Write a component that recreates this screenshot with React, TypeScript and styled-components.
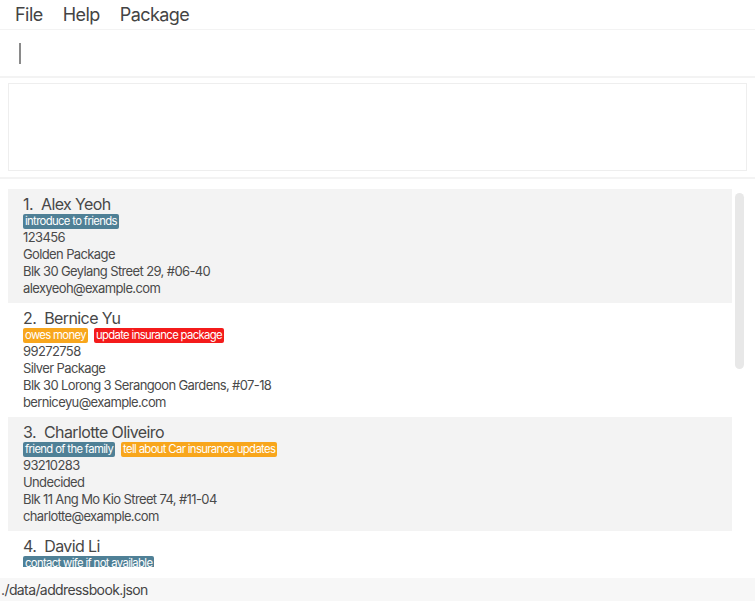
import React from "react";
import styled, { createGlobalStyle } from "styled-components";

const Global = createGlobalStyle`
  html, body { margin: 0; padding: 0; background: #ffffff; }
  body { font-family: Inter, "Liberation Sans", sans-serif; color: #4a4a4a; }
  * { box-sizing: border-box; }
`;

const Window = styled.div`
  width: 755px;
  height: 601px;
  display: flex;
  flex-direction: column;
  overflow: hidden;
  background: #fff;
`;

const MenuBar = styled.div`
  height: 29px;
  display: flex;
  align-items: center;
  gap: 20px;
  padding-left: 15px;
  font-size: 18px;
  color: #444;
  letter-spacing: -0.55px;
`;

const MenuItem = styled.span``;

const Separator = styled.div<{ $h?: number }>`
  height: ${(p) => p.$h ?? 2}px;
  background: #f3f3f3;
  flex: none;
`;

const CommandBox = styled.div`
  height: 46px;
  display: flex;
  align-items: center;
  padding-left: 19px;
`;

const Caret = styled.div`
  width: 1.5px;
  height: 21px;
  background: #8a8a8a;
`;

const ResultArea = styled.div`
  padding: 5px 8px 5px 8px;
  height: 99px;
`;

const ResultBox = styled.div`
  height: 88px;
  border: 1px solid #eeeeee;
`;

const ListArea = styled.div`
  flex: 1;
  min-height: 0;
  display: flex;
  align-items: flex-start;
  gap: 3px;
  padding: 10px 0 11px 8px;
`;

const List = styled.div`
  width: 724px;
  height: 100%;
  display: flex;
  flex-direction: column;
  overflow: hidden;
`;

const ScrollTrack = styled.div`
  width: 9px;
  margin-top: 4px;
  height: 176px;
  border-radius: 5px;
  background: #e8e8e8;
`;

const Card = styled.div<{ $alt: boolean }>`
  flex: none;
  height: 114px;
  padding: 5px 0 0 15px;
  background: ${(p) => (p.$alt ? "#f3f3f3" : "#ffffff")};
`;

const Name = styled.div`
  height: 20px;
  line-height: 20px;
  font-size: 16px;
  color: #474747;
  letter-spacing: -0.6px;
`;

const Index = styled.span`
  margin-right: 8px;
`;

const Tags = styled.div`
  display: flex;
  gap: 6px;
  height: 15px;
`;

const Tag = styled.span<{ $color: string }>`
  height: 15px;
  line-height: 15px;
  padding: 0 2px;
  font-size: 11.3px;
  color: #fff;
  border-radius: 2px;
  background: ${(p) => p.$color};
  letter-spacing: -0.65px;
`;

const Line = styled.div`
  height: 17px;
  line-height: 17px;
  font-size: 13px;
  color: #4a4a4a;
  letter-spacing: -0.62px;
`;

const StatusBar = styled.div`
  flex: none;
  height: 23px;
  background: #f7f7f7;
  display: flex;
  align-items: center;
  padding-left: 1px;
  font-size: 14px;
  color: #444;
  letter-spacing: -0.6px;
`;

const TEAL = "#4f8096";
const ORANGE = "#f8a61c";
const RED = "#f41b1b";

type Person = {
  name: string;
  tags: { label: string; color: string }[];
  phone: string;
  pkg: string;
  address: string;
  email: string;
};

const people: Person[] = [
  {
    name: "Alex Yeoh",
    tags: [{ label: "introduce to friends", color: TEAL }],
    phone: "123456",
    pkg: "Golden Package",
    address: "Blk 30 Geylang Street 29, #06-40",
    email: "alexyeoh@example.com",
  },
  {
    name: "Bernice Yu",
    tags: [
      { label: "owes money", color: ORANGE },
      { label: "update insurance package", color: RED },
    ],
    phone: "99272758",
    pkg: "Silver Package",
    address: "Blk 30 Lorong 3 Serangoon Gardens, #07-18",
    email: "berniceyu@example.com",
  },
  {
    name: "Charlotte Oliveiro",
    tags: [
      { label: "friend of the family", color: TEAL },
      { label: "tell about Car insurance updates", color: ORANGE },
    ],
    phone: "93210283",
    pkg: "Undecided",
    address: "Blk 11 Ang Mo Kio Street 74, #11-04",
    email: "charlotte@example.com",
  },
  {
    name: "David Li",
    tags: [{ label: "contact wife if not available", color: TEAL }],
    phone: "91031282",
    pkg: "Golden Package",
    address: "Blk 436 Serangoon Gardens Street 26, #16-43",
    email: "lidavid@example.com",
  },
];

export default function App() {
  return (
    <Window>
      <Global />
      <MenuBar>
        <MenuItem>File</MenuItem>
        <MenuItem>Help</MenuItem>
        <MenuItem>Package</MenuItem>
      </MenuBar>
      <Separator $h={1} />
      <CommandBox>
        <Caret />
      </CommandBox>
      <Separator />
      <ResultArea>
        <ResultBox />
      </ResultArea>
      <Separator />
      <ListArea>
        <List>
          {people.map((p, i) => (
            <Card key={p.name} $alt={i % 2 === 0}>
              <Name>
                <Index>{i + 1}.</Index>
                {p.name}
              </Name>
              <Tags>
                {p.tags.map((t) => (
                  <Tag key={t.label} $color={t.color}>
                    {t.label}
                  </Tag>
                ))}
              </Tags>
              <Line>{p.phone}</Line>
              <Line>{p.pkg}</Line>
              <Line>{p.address}</Line>
              <Line>{p.email}</Line>
            </Card>
          ))}
        </List>
        <ScrollTrack />
      </ListArea>
      <StatusBar>./data/addressbook.json</StatusBar>
    </Window>
  );
}
